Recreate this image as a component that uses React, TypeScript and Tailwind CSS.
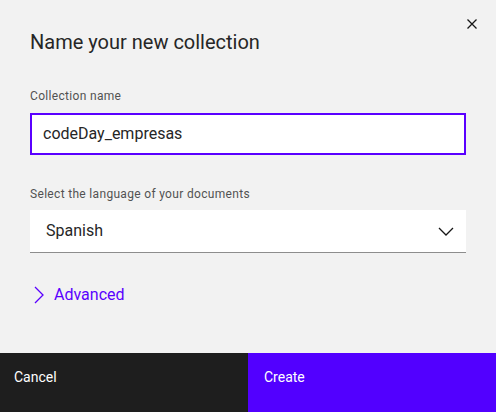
import React, { useState } from 'react';

export default function App() {
  const [name, setName] = useState('codeDay_empresas');
  const [language, setLanguage] = useState('Spanish');

  return (
    <div
      className="relative w-[496px] h-[412px] bg-[#f2f2f2] flex flex-col overflow-hidden"
      style={{ fontFamily: 'Roboto, "Noto Sans", sans-serif' }}
    >
      <button className="absolute top-[14px] right-[14px] w-5 h-5 flex items-center justify-center text-[#161616]">
        <svg width="10" height="10" viewBox="0 0 10 10" fill="none" stroke="currentColor" strokeWidth="1.3">
          <path d="M0.5 0.5 L9.5 9.5 M9.5 0.5 L0.5 9.5" />
        </svg>
      </button>

      <div className="flex-1 px-[30px] pt-[28px]">
        <h2 className="text-[20px] leading-[28px] text-[#262626] font-normal">Name your new collection</h2>

        <label className="block mt-[32px] text-[12px] leading-4 tracking-[0.32px] text-[#525252]">
          Collection name
        </label>
        <div className="mt-[9px] h-[42px] bg-white border-2 border-[#5a00ff] flex items-center px-[11px]">
          <input
            value={name}
            onChange={(e) => setName(e.target.value)}
            className="w-full bg-transparent outline-none text-[16px] text-[#262626]"
          />
        </div>

        <label className="block mt-[31px] text-[12px] leading-4 tracking-[0.32px] text-[#525252]">
          Select the language of your documents
        </label>
        <div className="mt-[8px] h-[43px] bg-white border-b border-[#8d8d8d] flex items-center pl-4 pr-3 relative">
          <span className="flex-1 text-[16px] text-[#262626]">{language}</span>
          <select
            value={language}
            onChange={(e) => setLanguage(e.target.value)}
            className="absolute inset-0 opacity-0 cursor-pointer"
          >
            <option>Spanish</option>
            <option>English</option>
            <option>French</option>
          </select>
          <svg width="16" height="9" viewBox="0 0 16 9" fill="none" stroke="#161616" strokeWidth="1.3">
            <path d="M1 1 L8 8 L15 1" />
          </svg>
        </div>

        <button className="mt-[30px] flex items-center gap-[10px] text-[#5a00ff]">
          <svg width="10" height="18" viewBox="0 0 10 18" fill="none" stroke="currentColor" strokeWidth="1.3" className="ml-[4px]">
            <path d="M1 1 L9 9 L1 17" />
          </svg>
          <span className="text-[16px] leading-6">Advanced</span>
        </button>
      </div>

      <div className="h-[59px] grid grid-cols-2">
        <button className="bg-[#1e1e1e] text-white text-[14px] text-left pl-[14px] pb-[10px]">Cancel</button>
        <button className="bg-[#5200ff] text-white text-[14px] text-left pl-4 pb-[10px]">Create</button>
      </div>
    </div>
  );
}
